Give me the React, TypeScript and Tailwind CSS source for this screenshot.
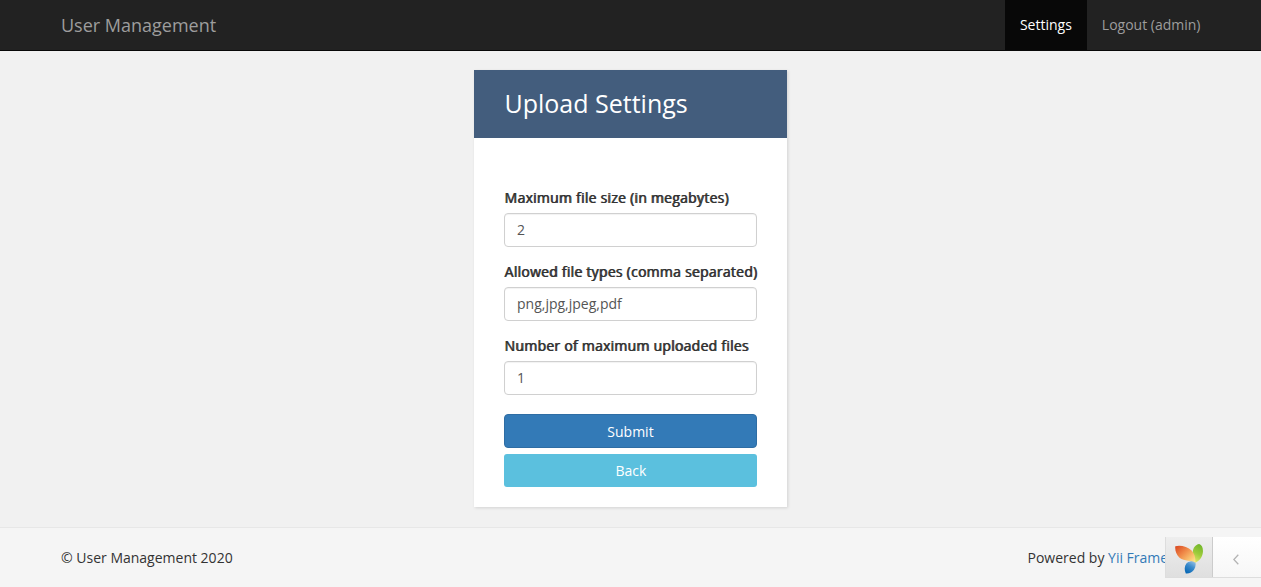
import { useState } from "react";

function Field({ label, initial }: { label: string; initial: string }) {
  const [value, setValue] = useState(initial);
  return (
    <label className="mb-[15px] block">
      <span className="mb-[5px] block h-5 whitespace-nowrap pl-[0.3px] leading-5 tracking-[0.25px] text-[#333] [text-shadow:0.8px_0_0_#333]">{label}</span>
      <input
        value={value}
        onChange={(e) => setValue(e.target.value)}
        className="block h-[34px] w-full rounded border border-[#d0d0d0] bg-white px-3 py-1.5 text-sm leading-5 text-[#555] shadow-[inset_0_1px_1px_rgba(0,0,0,0.055)] outline-none"
      />
    </label>
  );
}

function YiiLogo() {
  return (
    <svg className="h-[30px] w-[28px]" viewBox="0 0 28 30" aria-label="Yii">
      <defs>
        <linearGradient id="leafOrange" x1="0" y1="0" x2="1" y2="0.9">
          <stop offset="0" stopColor="#d8441f" />
          <stop offset="0.45" stopColor="#f08c4a" />
          <stop offset="1" stopColor="#ffe88a" />
        </linearGradient>
        <linearGradient id="leafGreen" x1="0.6" y1="0" x2="0.3" y2="1">
          <stop offset="0" stopColor="#73b72b" />
          <stop offset="0.5" stopColor="#9ccb3b" />
          <stop offset="1" stopColor="#e4e66a" />
        </linearGradient>
        <linearGradient id="leafBlue" x1="0.8" y1="0" x2="0.3" y2="1">
          <stop offset="0" stopColor="#a9cbe8" />
          <stop offset="0.5" stopColor="#3d8ccc" />
          <stop offset="1" stopColor="#0868b5" />
        </linearGradient>
      </defs>
      <path d="M20 15.500C21 19 21.200 22.200 19 25.800C17.200 28.500 14 29.900 10.800 29.500C9.200 26 9.300 22 11.400 19.500C13.500 17 18 17.500 20 15.500Z" fill="url(#leafBlue)" />
      <path d="M24.200 0C27.500 1 28.500 5.500 27.700 9.500C27 14 23.800 17 20.300 18.800C20.200 15 17.600 12.500 17.800 8C18 4 20.500 .6 24.200 0Z" fill="url(#leafGreen)" />
      <path d="M.3 2.300C5 .8 12.500 2.500 16.600 6.500C19.800 10 20.600 14 20.400 18.800C16.500 15.800 9.500 17.800 4.500 13.800C1.200 10.800 -.2 6 .3 2.300Z" fill="url(#leafOrange)" />
    </svg>
  );
}

export default function App() {
  return (
    <div className="flex h-[587px] flex-col overflow-hidden bg-[#f1f1f1] font-['Open_Sans',sans-serif] text-sm leading-5 text-[#333]">
      <nav className="flex h-[51px] shrink-0 justify-between border-b border-[#080808] bg-[#222] pr-[45px] pl-[61px] text-[#9d9d9d]">
        <a href="#" className="py-[15px] text-lg leading-5">User Management</a>
        <div className="flex">
          <a href="#" className="bg-[#080808] py-[15px] pr-[15.3px] pl-[14.7px] text-white">Settings</a>
          <button className="py-[15px] pr-[15.5px] pl-[14.7px]">Logout (admin)</button>
        </div>
      </nav>

      <main className="flex flex-1 items-start justify-center pt-[19px]">
        <section className="h-[437px] w-[313px] bg-white shadow-[1px_1px_3px_rgba(0,0,0,0.13)]">
          <h1 className="h-[68px] bg-[#435d7d] pr-[30px] pl-[30.5px] pt-4 text-[25px] leading-[34px] text-white">Upload Settings</h1>
          <form className="px-[30px] pt-[49.5px]" onSubmit={(e) => e.preventDefault()}>
            <Field label="Maximum file size (in megabytes)" initial="2" />
            <Field label="Allowed file types (comma separated)" initial="png,jpg,jpeg,pdf" />
            <Field label="Number of maximum uploaded files" initial="1" />
            <button className="mt-[19.5px] block h-[34px] w-full rounded border border-[#2e6da4] bg-[#337ab7] pt-0.5 text-white">Submit</button>
            <button type="button" className="mt-[6px] block h-[33px] w-full rounded-[3px] bg-[#5bc0de] pl-px text-white">Back</button>
          </form>
        </section>
      </main>

      <footer className="relative flex h-[60px] shrink-0 justify-between border-t border-[#e7e7e7] bg-[#f5f5f5] pt-5 pl-[61px]">
        <p>© User Management 2020</p>
        <p className="w-[233.5px] whitespace-nowrap">Powered by <a href="#" className="text-[#337ab7]">Yii Framework</a></p>
        <div className="absolute top-[9px] right-0 flex h-[41px] w-[96px] border-b border-l border-[#ddd] bg-linear-to-b from-white to-[#f7f7f7]">
          <div className="flex w-[47px] items-center justify-center border-r border-[#ccc] bg-linear-to-b from-[#eee] to-[#dfdfdf] pt-[3px]">
            <YiiLogo />
          </div>
          <button className="flex flex-1 items-center justify-center pt-1 pr-[3px]" aria-label="Expand toolbar">
            <svg className="h-[11px] w-[6px]" viewBox="0 0 6 11" fill="none" stroke="#b4b4b4" strokeWidth="1.3"><path d="M5.300.7.8 5.500l4.500 4.800" /></svg>
          </button>
        </div>
      </footer>
    </div>
  );
}
